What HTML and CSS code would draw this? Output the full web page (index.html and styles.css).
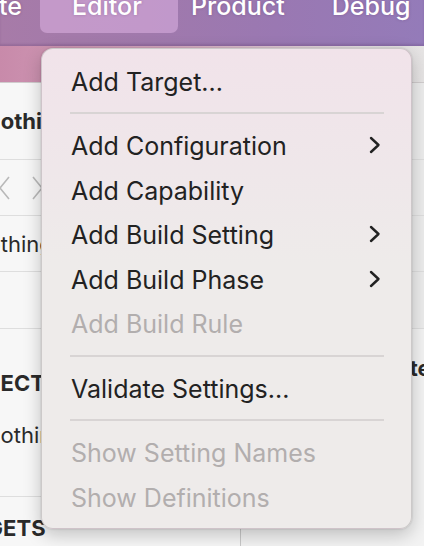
FILE: index.html
```html
<!DOCTYPE html>
<html>
<head>
<meta charset="utf-8">
<link rel="stylesheet" href="styles.css">
</head>
<body>
<div class="screen">
  <div class="menubar">
    <span class="mb-item mb-first">te</span>
    <span class="mb-item mb-active">Editor</span>
    <span class="mb-item mb-product">Product</span>
    <span class="mb-item">Debug</span>
  </div>
  <div class="toolbar"></div>
  <div class="content">
    <div class="col-left">
      <div class="row r1"><span class="bold shift-n">Nothing</span></div>
      <div class="row r2">
        <svg class="nav" width="50" height="24" viewBox="0 0 50 24"><path d="M10 1 L1 12 L10 23" fill="none" stroke="#b9b9b9" stroke-width="1.6"/><path d="M34 1 L43 12 L34 23" fill="none" stroke="#b9b9b9" stroke-width="1.6"/></svg>
      </div>
      <div class="row r3"><span class="reg shift-no">Nothing</span></div>
      <div class="row r4"></div>
      <div class="row r5">
        <span class="bold shift-pro">PROJECT</span>
        <span class="reg shift-n2">Nothing</span>
      </div>
      <div class="row r6"><span class="bold shift-tar">TARGETS</span></div>
    </div>
    <div class="col-right">
      <div class="row r1 gray"></div>
      <div class="row r2 gray"></div>
      <div class="row r3 gray"></div>
      <div class="row r4 gray"></div>
      <div class="row r7"><span class="bold shift-set">Template</span></div>
    </div>
  </div>

  <div class="menu">
    <div class="mi">Add Target...</div>
    <div class="sep"></div>
    <div class="mi">Add Configuration<svg class="chev" width="12" height="18" viewBox="0 0 12 18"><path d="M2 2 L9.5 9 L2 16" fill="none" stroke="#222" stroke-width="2.4" stroke-linecap="round" stroke-linejoin="round"/></svg></div>
    <div class="mi">Add Capability</div>
    <div class="mi">Add Build Setting<svg class="chev" width="12" height="18" viewBox="0 0 12 18"><path d="M2 2 L9.5 9 L2 16" fill="none" stroke="#222" stroke-width="2.4" stroke-linecap="round" stroke-linejoin="round"/></svg></div>
    <div class="mi">Add Build Phase<svg class="chev" width="12" height="18" viewBox="0 0 12 18"><path d="M2 2 L9.5 9 L2 16" fill="none" stroke="#222" stroke-width="2.4" stroke-linecap="round" stroke-linejoin="round"/></svg></div>
    <div class="mi dis">Add Build Rule</div>
    <div class="sep"></div>
    <div class="mi">Validate Settings...</div>
    <div class="sep"></div>
    <div class="mi dis">Show Setting Names</div>
    <div class="mi dis">Show Definitions</div>
  </div>
</div>
</body>
</html>
```

FILE: styles.css
```css
html, body {
  margin: 0;
  padding: 0;
}
body {
  width: 424px;
  height: 546px;
  overflow: hidden;
  font-family: Inter, "Noto Sans", sans-serif;
  background: #f4f4f4;
}
.screen {
  position: relative;
  width: 424px;
  height: 546px;
  overflow: hidden;
}
.menubar {
  height: 46px;
  display: flex;
  align-items: flex-start;
  overflow: hidden;
  background: linear-gradient(90deg, #a77ba8 0%, #a079ac 35%, #9a78b2 65%, #947bb9 100%);
  box-shadow: inset 0 -2px 2px rgba(80, 40, 90, 0.18);
}
.mb-item {
  flex: none;
  color: #fff;
  font-size: 25px;
  font-weight: 500;
  line-height: 24px;
  margin-top: -6px;
  text-shadow: 0 0 3px rgba(60, 20, 70, 0.25);
  white-space: nowrap;
}
.mb-first {
  width: 40px;
  margin-left: -1px;
}
.mb-active {
  box-sizing: border-box;
  width: 138px;
  height: 39px;
  background: rgba(235, 190, 240, 0.45);
  border-radius: 0 0 7px 7px;
  padding-left: 32px;
  margin-left: 1px;
  margin-right: 13px;
}
.mb-product {
  margin-right: 47px;
}
.toolbar {
  height: 36px;
  background: linear-gradient(90deg, #c88aaa 0%, #d6a9c0 40%, #e4dfe1 85%, #e6e4e4 100%);
  border-bottom: 1px solid #d0cccd;
}
.content {
  display: flex;
  height: 463px;
}
.col-left {
  width: 240px;
  flex: none;
  background: #f7f7f7;
  border-right: 1px solid #c9c9c9;
  display: flex;
  flex-direction: column;
}
.col-right {
  flex: 1;
  display: flex;
  flex-direction: column;
  background: #f3f3f3;
  overflow: hidden;
}
.row {
  border-bottom: 1px solid #dedede;
  display: flex;
  align-items: center;
  overflow: hidden;
  white-space: nowrap;
  flex: none;
}
.gray { background: #ececec; }
.r1 { height: 76px; }
.r2 { height: 55px; }
.r3 { height: 55px; }
.r4 { height: 56px; }
.r5 {
  height: 167px;
  flex-direction: column;
  align-items: flex-start;
  justify-content: flex-start;
}
.r6 { height: 49px; border-bottom: none; align-items: flex-start; }
.r7 { border-bottom: none; height: 80px; align-items: flex-start; }
.bold {
  font-weight: 700;
  font-size: 22px;
  color: #2a2a2a;
}
.reg {
  font-size: 22px;
  color: #2a2a2a;
}
.shift-n { margin-left: -16px; }
.shift-no { margin-left: -29px; }
.shift-pro { margin-left: -58px; margin-top: 41px; }
.shift-n2 { margin-left: -16px; margin-top: 26px; }
.shift-tar { margin-left: -57px; margin-top: 18px; }
.shift-set { margin-left: 90px; margin-top: 26px; }
.nav { margin-left: -1px; }

.menu {
  position: absolute;
  left: 41px;
  top: 48px;
  width: 371px;
  height: 481px;
  box-sizing: border-box;
  padding-top: 9.5px;
  border-radius: 12px;
  background: linear-gradient(180deg, #f1e3ea 0%, #efe7ea 25%, #eeebea 45%, #eeebea 100%);
  border: 1px solid rgba(0, 0, 0, 0.14);
  box-shadow: 0 6px 18px rgba(0, 0, 0, 0.22), 0 0 2px rgba(0, 0, 0, 0.2);
}
.mi {
  box-sizing: border-box;
  height: 44.5px;
  display: flex;
  align-items: center;
  justify-content: space-between;
  padding-top: 2px;
  padding-left: 29px;
  padding-right: 30px;
  font-size: 25px;
  color: #222;
}
.mi .chev { margin-top: -2px; }
.mi.dis { color: #b2aeae; }
.chev { flex: none; }
.sep {
  height: 2px;
  margin: 9px 27px 9px 28px;
  background: #d8d4d4;
}
```
